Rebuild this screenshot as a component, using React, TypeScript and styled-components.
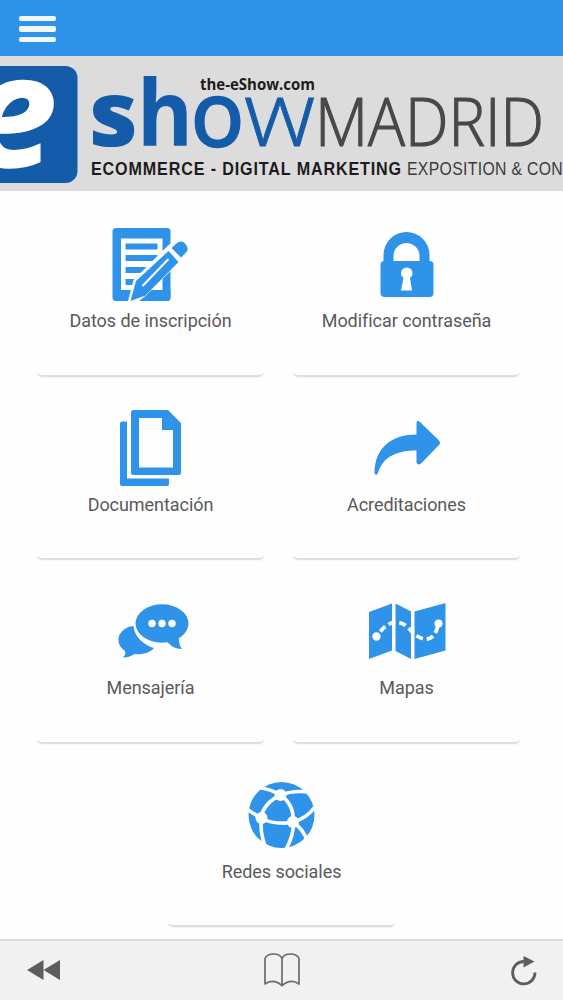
import React from "react";
import styled, { createGlobalStyle } from "styled-components";

const BLUE = "#2f93e9";

const GlobalStyle = createGlobalStyle`
  * {
    box-sizing: border-box;
  }

  body {
    margin: 0;
    background: #fefefe;
    font-family: Roboto, "Liberation Sans", sans-serif;
  }
`;

const Screen = styled.div`
  display: flex;
  flex-direction: column;
  width: 563px;
  height: 1000px;
  overflow: hidden;
`;

const TopBar = styled.header`
  display: flex;
  flex: 0 0 56px;
  align-items: center;
  padding: 2px 0 0 19px;
  background: ${BLUE};
`;

const MenuButton = styled.button`
  display: flex;
  flex-direction: column;
  gap: 5px;
  width: 37px;
  padding: 0;
  border: 0;
  background: none;
  cursor: pointer;
`;

const MenuLine = styled.span`
  height: 5.6px;
  width: 100%;
  border-radius: 2px;
  background: #f0f7fe;
`;

const Banner = styled.div`
  flex: 0 0 135px;
  height: 135px;
  background: #dddcdd;
  overflow: hidden;

  svg {
    display: block;
  }
`;

const Menu = styled.main`
  display: flex;
  flex: 1;
  flex-direction: column;
  gap: 29px;
  padding-top: 31px;
  min-height: 0;
`;

const Row = styled.div<{ $single?: boolean }>`
  display: flex;
  gap: 29px;
  justify-content: ${({ $single }) => ($single ? "center" : "flex-start")};
  padding-left: ${({ $single }) => ($single ? "0" : "37px")};
`;

const CardWrapper = styled.a`
  display: flex;
  flex-direction: column;
  align-items: center;
  width: 227px;
  height: 154.5px;
  border-radius: 5px;
  border-bottom: 2px solid #dedede;
  box-shadow: 0 1px 1px rgba(0, 0, 0, 0.04);
  color: #59595b;
  cursor: pointer;
`;

const IconBox = styled.div`
  height: 85px;

  svg {
    display: block;
  }
`;

const CardTitle = styled.span`
  font-size: 18px;
  line-height: 28px;
  letter-spacing: -0.05px;
  white-space: nowrap;
`;

const BottomBar = styled.footer`
  display: grid;
  flex: 0 0 61px;
  grid-template-columns: 1fr auto 1fr;
  align-items: center;
  padding: 0 25px 1px 26px;
  border-top: 2px solid #dcdcdc;
  background: #f2f1f2;
`;

const ToolButton = styled.button<{ $end?: boolean }>`
  display: flex;
  justify-self: ${({ $end }) => ($end ? "end" : "start")};
  padding: 0;
  border: 0;
  background: none;
  cursor: pointer;
`;

const Logo = () => (
  <svg width="563" height="135" viewBox="0 56 563 135">
    <rect x="-20" y="66" width="97.5" height="117" rx="12" fill="#145ca9" />
    <g fontFamily='"Open Sans", sans-serif'>
      <text x="-33" y="166" fontSize="155" fontWeight="700" fontStyle="italic" fill="#fff" stroke="#fff" strokeWidth="1.500" textLength="90" lengthAdjust="spacingAndGlyphs">e</text>
      <g fill="#145ca9" fontSize="91">
        <text x="89" y="146" fontWeight="800" textLength="49" lengthAdjust="spacingAndGlyphs">s</text>
        <text x="137" y="146" fontWeight="700" textLength="56" lengthAdjust="spacingAndGlyphs">h</text>
        <text x="191" y="145.500" fontSize="89" fontWeight="400" stroke="#145ca9" strokeWidth="2.600" textLength="53" lengthAdjust="spacingAndGlyphs">o</text>
        <text x="244" y="146" fontWeight="300" stroke="#145ca9" strokeWidth="0.800" textLength="71" lengthAdjust="spacingAndGlyphs">w</text>
      </g>
      <text x="315" y="146" fontSize="67" fontWeight="300" fill="#48484a" stroke="#48484a" strokeWidth="1.200" textLength="229" lengthAdjust="spacingAndGlyphs">MADRID</text>
      <text x="200" y="90" fontSize="16.500" fontWeight="700" fill="#1c1c1c" textLength="115" lengthAdjust="spacingAndGlyphs">the-eShow.com</text>
    </g>
    <g fontFamily='"Liberation Sans Narrow", "Liberation Sans", sans-serif' fontSize="18.500">
      <text x="91" y="174.500" fontWeight="700" fill="#1c1c1c" letterSpacing="1" textLength="311" lengthAdjust="spacingAndGlyphs">ECOMMERCE - DIGITAL MARKETING</text>
      <text x="407" y="174.500" fill="#3a3a3a" letterSpacing="0.400" textLength="156" lengthAdjust="spacingAndGlyphs">EXPOSITION &amp; CON</text>
    </g>
  </svg>
);

const FormIcon = () => (
  <svg width="78" height="84" viewBox="111.500 222 78 84" fill={BLUE}>
    <rect x="112" y="228" width="58" height="73" rx="3.5" />
    <path d="M120.5 238.500H162V290H120.500z" fill="#fff" />
    <path d="M125 243.500h32v6h-32zM125 255h32v6h-32zM125 267h24v6h-24zM125 279h11v6h-11z" />
    <path d="M127 303l6-23L167 246l12 -10 14 12-12 12-36 36-9 7z" fill="#fefefe" />
    <path d="M170 290v7.500q0 3.500-3.500 3.500H144l4-3 10-8z" />
    <path d="M130 301l5.500-20L168 251l10 11-33 33.500zM171 248l5-4.500q5-4 9 .5t.5 8.500l-5 5z" />
    <path d="M142 286l26-27" stroke="#fefefe" strokeWidth="2" />
  </svg>
);

const LockIcon = () => (
  <svg width="56" height="84" viewBox="379.500 222 56 84" fill={BLUE}>
    <rect x="381" y="261" width="53" height="36" rx="4" />
    <path d="M384 262v-7a23 23 0 0 1 46 0v7h-10v-6a13 13 0 0 0-26 0v6z" />
    <path d="M404 278a5.800 5.800 0 1 1 6.500 0l2 12.500h-11z" fill="#fefefe" />
  </svg>
);

const DocumentsIcon = () => (
  <svg width="64" height="84" viewBox="119 405.500 64 84" fill={BLUE}>
    <path d="M120 423q0-2 2-2h5v57h42v5.500q0 2-2 2h-45q-2 0-2-2z" />
    <path fillRule="evenodd" d="M131 412q0-2.500 2.500-2.500H168l13 13V472q0 2.500-2.500 2.500h-45q-2.500 0-2.500-2.500zM139 417.500V467h34v-37.500h-11v-12z" />
  </svg>
);

const ForwardIcon = () => (
  <svg width="68" height="84" viewBox="373 405.500 68 84" fill={BLUE}>
    <path d="M416.500 423q0-4 3.500-1.500L439 440q2 2.500 0 4.500l-18 18.500q-4 2.500-4.500-1.500V450c-18 0-33 5-38.500 22-.5 3-3.500 3-3.500 0C375 446 393 434 416.500 434z" />
  </svg>
);

const ChatIcon = () => (
  <svg width="78" height="84" viewBox="111.500 589 78 84" fill={BLUE}>
    <path d="M133 626c-9 1-15 7-15 13.500 0 5 2 8 6.500 11.500 1 3 0 4-2 6.500 4 0 8-1 11.500-3.500 8 1 15-1 19.500-6C143 645 134 637 133 626z" />
    <ellipse cx="161.500" cy="623.500" rx="26.500" ry="19.200" />
    <path d="M166 641c4 5 9 8 15.500 8-2.500-3-3-6-3-11z" />
    <g fill="#fefefe">
      <circle cx="151.500" cy="623.500" r="3.700" />
      <circle cx="161.500" cy="623.500" r="3.700" />
      <circle cx="171.500" cy="623.500" r="3.700" />
    </g>
  </svg>
);

const MapIcon = () => (
  <svg width="78" height="84" viewBox="368 589 78 84" fill={BLUE}>
    <path d="M369 612l23-8.500v47L369 659zM395.500 603.500l15.500 8V659l-15.500-8zM414.500 611.500l31-8.500v47.500l-31 8.500z" />
    <path d="M376 637C385 624 393 621 399 622.500C409 625 410 632 417 636C426 642 435 640 438 625" fill="none" stroke="#fefefe" strokeWidth="3.800" strokeDasharray="7 4" strokeDashoffset="4" />
    <circle cx="376.500" cy="636.500" r="4.200" fill="#fefefe" />
    <circle cx="438.500" cy="623.500" r="4" fill="#fefefe" />
  </svg>
);

const NetworkIcon = () => (
  <svg width="68" height="84" viewBox="247.500 772.500 68 84">
    <circle cx="281" cy="814.500" r="33" fill={BLUE} />
    <g fill="none" stroke="#fefefe" strokeWidth="3.600">
      <path d="M259 787q12 2 21 7.500q13-5 28-3" />
      <path d="M280 794.500q-17 8-20 24" />
      <path d="M280 794.500q14 10 12.500 27" />
      <path d="M247 809l13 8.500q13 7 32 4.500q15-5 22-15" />
      <path d="M261 818q-2 13 4 29M293 822q0 13-7 26M293 822q10 7 13 17" />
    </g>
    <g fill="#fefefe">
      <circle cx="280" cy="794.500" r="6" />
      <circle cx="261" cy="817.500" r="6" />
      <circle cx="292.500" cy="821.500" r="6" />
    </g>
  </svg>
);

const RewindIcon = () => (
  <svg width="35" height="22" viewBox="-1 0 35 22" fill="#5d5d5f">
    <path d="M0 11L16.500 1v20zM16.500 11L33 1v20z" />
  </svg>
);

const BookIcon = () => (
  <svg width="36" height="34" viewBox="0.500 0 36 34" fill="none" stroke="#6b6b6d" strokeWidth="1.700" strokeLinejoin="round">
    <path d="M18.500 5.500Q16.500 1 10 1T1.500 5.500V31q8-6 17 1.500Q27.500 25 35.500 31V5.500Q33.500 1 27 1T18.500 5.500v27" />
  </svg>
);

const ReloadIcon = () => (
  <svg width="27" height="31" viewBox="0 0 27 31">
    <path d="M24 17.500A11.200 11.200 0 1 1 12.800 6.500" fill="none" stroke="#5d5d5f" strokeWidth="2.800" />
    <path d="M12.500 1l11 5.500-11 6z" fill="#5d5d5f" />
  </svg>
);

interface CardProps {
  item: {
    title: string;
    icon: React.FC;
  };
}

const Card: React.FC<CardProps> = ({ item }) => {
  const Icon = item.icon;
  return (
    <CardWrapper>
      <IconBox>
        <Icon />
      </IconBox>
      <CardTitle>{item.title}</CardTitle>
    </CardWrapper>
  );
};

const rows: CardProps["item"][][] = [
  [
    { title: "Datos de inscripción", icon: FormIcon },
    { title: "Modificar contraseña", icon: LockIcon },
  ],
  [
    { title: "Documentación", icon: DocumentsIcon },
    { title: "Acreditaciones", icon: ForwardIcon },
  ],
  [
    { title: "Mensajería", icon: ChatIcon },
    { title: "Mapas", icon: MapIcon },
  ],
  [{ title: "Redes sociales", icon: NetworkIcon }],
];

const App: React.FC = () => {
  return (
    <>
      <GlobalStyle />
      <Screen>
        <TopBar>
          <MenuButton>
            <MenuLine />
            <MenuLine />
            <MenuLine />
          </MenuButton>
        </TopBar>
        <Banner>
          <Logo />
        </Banner>
        <Menu>
          {rows.map((row) => (
            <Row key={row[0].title} $single={row.length === 1}>
              {row.map((item) => (
                <Card key={item.title} item={item} />
              ))}
            </Row>
          ))}
        </Menu>
        <BottomBar>
          <ToolButton>
            <RewindIcon />
          </ToolButton>
          <ToolButton>
            <BookIcon />
          </ToolButton>
          <ToolButton $end>
            <ReloadIcon />
          </ToolButton>
        </BottomBar>
      </Screen>
    </>
  );
};

export default App;
